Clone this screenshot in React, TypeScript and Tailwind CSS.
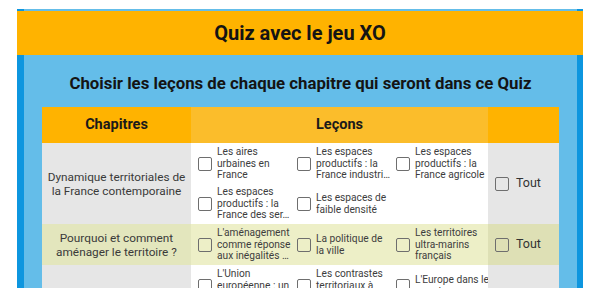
import React from "react";

type Row = { chapter: string; lessons: string[][]; tone: "gray" | "olive" };

// lessons written as the lines the app shows (3 lines max, cut with an ellipsis)
const rows: Row[] = [
  {
    chapter: "Dynamique territoriales de la France contemporaine",
    tone: "gray",
    lessons: [
      ["Les aires", "urbaines en", "France"],
      ["Les espaces", "productifs : la", "France industri…"],
      ["Les espaces", "productifs : la", "France agricole"],
      ["Les espaces", "productifs : la", "France des ser…"],
      ["Les espaces de", "faible densité"],
    ],
  },
  {
    chapter: "Pourquoi et comment aménager le territoire ?",
    tone: "olive",
    lessons: [
      ["L'aménagement", "comme réponse", "aux inégalités …"],
      ["La politique de", "la ville"],
      ["Les territoires", "ultra-marins", "français"],
    ],
  },
  {
    chapter: "La France et l'Union européenne",
    tone: "gray",
    lessons: [
      ["L'Union", "européenne : un", "territoire d'a…"],
      ["Les contrastes", "territoriaux à", "l'échelle eu…"],
      ["L'Europe dans le", "monde"],
      ["La France dans", "le monde"],
    ],
  },
];

function Box() {
  return (
    <span className="block w-[14px] h-[14px] shrink-0 rounded-[2px] border-[1.5px] border-[#6e6e6e]" />
  );
}

function Lesson({ lines }: { lines: string[] }) {
  return (
    <div className="h-[40px] flex items-center">
      <div className="w-[26px] flex justify-center pl-[1px] shrink-0">
        <Box />
      </div>
      <div className="text-[10.2px] leading-[11.6px] text-[#3d3d3d] whitespace-nowrap">
        {lines.map((t) => (
          <div key={t}>{t}</div>
        ))}
      </div>
    </div>
  );
}

function TableRow({ row }: { row: Row }) {
  const side = row.tone === "olive" ? "bg-[#e3e6bd]" : "bg-[#e6e6e6]";
  const mid = row.tone === "olive" ? "bg-[#edefc7]" : "bg-white";
  const end = row.tone === "olive" ? "bg-[#dee0b5]" : "bg-[#e6e6e6]";
  return (
    <div className="grid grid-cols-[149px_297px_71px]">
      <div
        className={`${side} flex items-center justify-center px-[2px] text-center text-[11.8px] leading-[14px] text-[#3a3a3a]`}
      >
        {row.chapter}
      </div>
      <div className={`${mid} grid grid-cols-3 py-[0.5px]`}>
        {row.lessons.map((l) => (
          <Lesson key={l.join(" ")} lines={l} />
        ))}
      </div>
      <div className={`${end} flex items-center pl-[7px] gap-[7px]`}>
        <Box />
        <span className="text-[12.5px] text-[#333]">Tout</span>
      </div>
    </div>
  );
}

export default function App() {
  return (
    <div className="w-[600px] h-[300px] bg-white pt-[9px] px-[17px] font-['Roboto',sans-serif] overflow-hidden">
      <div className="h-[279px] bg-[#64bde9] overflow-hidden flex flex-col">
        <div className="h-[2px] shrink-0 border-l-[7px] border-r-[6px] border-[#0d96df]" />
        <div className="h-[44px] shrink-0 bg-[#ffb300] flex items-center justify-center">
          <h1 className="text-[20px] font-bold text-[#141414]">Quiz avec le jeu XO</h1>
        </div>
        <div className="flex-1 border-l-[7px] border-r-[6px] border-[#0d96df] px-[18px]">
          <div className="h-[52px] pt-[6px] flex items-center justify-center">
            <h2 className="text-[16.8px] font-bold text-[#141414] whitespace-nowrap">
              Choisir les leçons de chaque chapitre qui seront dans ce Quiz
            </h2>
          </div>
          <div className="grid grid-cols-[149px_297px_71px] h-[36px] text-[14.5px] font-bold text-[#1a1a1a]">
            <div className="bg-[#ffb300] flex items-center justify-center">Chapitres</div>
            <div className="bg-[#fbbd2b] flex items-center justify-center">Leçons</div>
            <div className="bg-[#ffb300]" />
          </div>
          {rows.map((r) => (
            <TableRow key={r.chapter} row={r} />
          ))}
        </div>
      </div>
    </div>
  );
}
